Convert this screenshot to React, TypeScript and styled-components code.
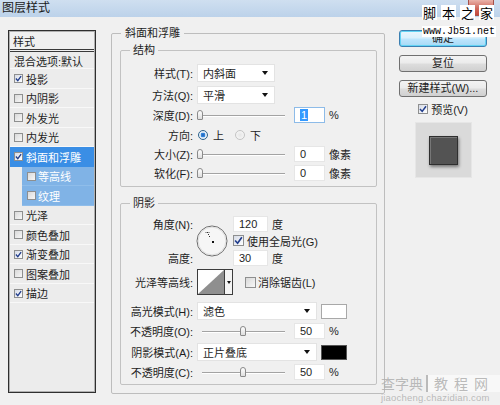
import React from 'react';
import styled, { createGlobalStyle, css } from 'styled-components';

const GlobalStyle = createGlobalStyle`
  html, body {
    margin: 0;
    padding: 0;
    background: #f0f0f0;
  }
  body {
    font-family: "Liberation Sans", "Noto Sans CJK SC", sans-serif;
    font-size: 11px;
    color: #1e1e1e;
  }
`;

const Window = styled.div`
  position: relative;
  width: 500px;
  height: 405px;
  overflow: hidden;
  background: #f0f0f0;
  display: flex;
  flex-direction: column;
`;

const TitleBar = styled.div`
  height: 17px;
  flex: none;
  display: flex;
  align-items: center;
  justify-content: space-between;
  padding-left: 2px;
  background: linear-gradient(#cfdff0, #bcd2ea);
  font-size: 12px;
  line-height: 17px;
  color: #1b1b1b;
`;

const CloseButton = styled.div`
  align-self: flex-start;
  width: 26px;
  height: 16px;
  margin-right: 6px;
  box-sizing: border-box;
  border: 1px solid #a5524a;
  border-top: none;
  border-radius: 0 0 4px 4px;
  background: linear-gradient(#eab3aa, #d0695d 55%, #c2473b);
`;

const Body = styled.div`
  display: flex;
  align-items: flex-start;
  padding: 13px 0 0 8px;
`;

/* ---- left list ---- */

const Sidebar = styled.div`
  flex: none;
  width: 88px;
  height: 363px;
  box-sizing: border-box;
  border: 1px solid #2f2f2f;
  padding: 1px;
  background: #ececec;
  box-shadow: inset 0 0 0 1px #b0b0b0;
`;

const SideHeader = styled.div`
  height: 17px;
  padding-left: 3px;
  display: flex;
  align-items: center;
  border-bottom: 3px double #3a3a3a;
  background: #f0f0f0;
`;

const SideRow = styled.div<{ $selected?: boolean; $sub?: boolean; $h?: number }>`
  height: ${(p) => p.$h ?? 19.5}px;
  display: flex;
  align-items: center;
  gap: 3px;
  padding-left: 4px;
  box-shadow: inset 0 -1px 0 #f8f8f8;
  white-space: nowrap;
  ${(p) =>
    p.$selected &&
    css`
      background: #3a8ee5;
      color: #fff;
      box-shadow: none;
    `}
  ${(p) =>
    p.$sub &&
    css`
      margin-left: 12px;
      padding-left: 5px;
      gap: 2px;
      background: #80b3e6;
      color: #fff;
      box-shadow: inset 0 -1px 0 #8fbdea;
    `}
`;

const CheckBox = styled.span<{ $size: number; $on?: boolean }>`
  flex: none;
  width: ${(p) => p.$size}px;
  height: ${(p) => p.$size}px;
  box-sizing: border-box;
  border: 1px solid #8e8f8f;
  background: ${(p) => (p.$on ? 'linear-gradient(135deg, #d6dbe6, #ffffff)' : 'linear-gradient(135deg, #d9d9d9, #f7f7f7)')};
  display: inline-flex;
  align-items: center;
  justify-content: center;
`;

const Check: React.FC<{ on?: boolean; size?: number }> = ({ on, size = 9 }) => (
  <CheckBox $size={size} $on={on}>
    {on && (
      <svg width={size - 2} height={size - 2} viewBox="0 0 8 8">
        <path d="M1 4 L3.2 6.4 L7 1.2" fill="none" stroke="#213d8c" strokeWidth="1.5" />
      </svg>
    )}
  </CheckBox>
);

/* ---- groups ---- */

const Outer = styled.fieldset`
  flex: none;
  width: 274px;
  box-sizing: border-box;
  margin: -4px 0 0 15px;
  padding: 3px 7px 8px 8px;
  border: 1px solid #bdbdbd;
  border-radius: 2px;
  min-width: 0;
`;

const Group = styled.fieldset<{ $mt?: number; $pt: number; $pb: number }>`
  margin: ${(p) => p.$mt ?? 0}px 0 0;
  padding: ${(p) => p.$pt}px 0 ${(p) => p.$pb}px;
  border: 1px solid #c2c2c2;
  border-radius: 2px;
  min-width: 0;
`;

const Legend = styled.legend<{ $x: number; $pad: number }>`
  margin-left: ${(p) => p.$x}px;
  padding: 0 ${(p) => p.$pad}px;
  line-height: 14px;
  font-size: 11px;
`;

const Row = styled.div<{ $h: number; $mt?: number }>`
  height: ${(p) => p.$h}px;
  margin-top: ${(p) => p.$mt ?? 0}px;
  display: flex;
  align-items: center;
  white-space: nowrap;
`;

const Label = styled.span`
  flex: none;
  width: 72px;
  margin-right: 4px;
  text-align: right;
`;

const Select = styled.div<{ $w: number }>`
  flex: none;
  width: ${(p) => p.$w}px;
  height: 18px;
  box-sizing: border-box;
  padding: 0 6px 0 5px;
  display: flex;
  align-items: center;
  justify-content: space-between;
  background: #fff;
  border: 1px solid #e3e3e3;
`;

const Caret = styled.span`
  width: 0;
  height: 0;
  border-left: 3.5px solid transparent;
  border-right: 3.5px solid transparent;
  border-top: 4px solid #111;
`;

const SliderWrap = styled.div<{ $w: number; $ml?: number }>`
  position: relative;
  flex: none;
  width: ${(p) => p.$w}px;
  height: 10px;
  margin-left: ${(p) => p.$ml ?? 0}px;
`;

const Track = styled.div`
  position: absolute;
  left: 2px;
  right: 0;
  top: 5px;
  height: 1px;
  background: #a3a3a3;
  box-shadow: 0 1px 0 #ffffff;
`;

const Thumb = styled.div`
  position: absolute;
  top: 0;
  width: 6px;
  height: 10px;
  box-sizing: border-box;
  border: 1px solid #8a8a8a;
  border-radius: 3px 3px 1px 1px;
  background: linear-gradient(#ffffff, #dedede);
`;

const Slider: React.FC<{ w: number; ml?: number; pos: number }> = ({ w, ml, pos }) => (
  <SliderWrap $w={w} $ml={ml}>
    <Track />
    <Thumb style={{ left: Math.round(pos * (w - 6)) }} />
  </SliderWrap>
);

const NumBox = styled.div<{ $w?: number; $ml?: number; $focus?: boolean }>`
  flex: none;
  width: ${(p) => p.$w ?? 31}px;
  height: 16px;
  margin-left: ${(p) => p.$ml ?? 9}px;
  box-sizing: border-box;
  padding-left: 5px;
  display: flex;
  align-items: center;
  background: #fff;
  border: 1px solid ${(p) => (p.$focus ? '#8dbbe8' : '#e6e6e6')};
`;

const Highlight = styled.span`
  background: #3399ff;
  color: #fff;
  padding: 0 1px;
  line-height: 12px;
`;

const Unit = styled.span`
  margin-left: 4px;
`;

const Radio = styled.span<{ $on?: boolean }>`
  flex: none;
  width: 10px;
  height: 10px;
  box-sizing: border-box;
  border-radius: 50%;
  margin-left: ${(p) => (p.$on ? 1 : 11)}px;
  margin-right: 5px;
  ${(p) =>
    p.$on
      ? css`
          border: 1px solid #2c628b;
          background: radial-gradient(circle, #1b5fb8 0, #3c8ee0 2.2px, #dbe9f6 2.6px, #f4f8fc 100%);
        `
      : css`
          border: 1px solid #c4c4c4;
          background: radial-gradient(circle, #e6e6e6, #fafafa);
        `}
`;

const DialGrid = styled.div`
  display: grid;
  grid-template-columns: 72px 36px 1fr;
  grid-template-rows: repeat(3, 17px);
  white-space: nowrap;
`;

const GridLabel = styled.span<{ $row: number }>`
  grid-column: 1;
  grid-row: ${(p) => p.$row};
  align-self: center;
  text-align: right;
`;

const DialCell = styled.div`
  grid-column: 2;
  grid-row: 1 / 4;
  align-self: center;
  margin-left: 3px;
  display: flex;
`;

const GridCell = styled.div<{ $row: number }>`
  grid-column: 3;
  grid-row: ${(p) => p.$row};
  display: flex;
  align-items: center;
  margin-left: 4px;
`;

const CheckText = styled.span<{ $gap: number }>`
  margin-left: ${(p) => p.$gap}px;
`;

const AngleDial = () => (
  <svg width="32" height="32" viewBox="0 0 32 32">
    <circle cx="16" cy="16" r="15" fill="#f6f6f6" stroke="#6c6c6c" />
    <circle cx="16" cy="16" r="13.8" fill="none" stroke="#e0e0e0" />
    <rect x="16" y="16" width="2" height="2" fill="#111" />
    <rect x="13" y="11" width="1" height="1" fill="#333" />
    <rect x="12" y="9" width="1" height="1" fill="#333" />
    <rect x="11" y="7" width="1" height="1" fill="#333" />
    <rect x="9.5" y="7" width="1" height="1" fill="#555" />
    <rect x="12.5" y="7" width="1" height="1" fill="#555" />
  </svg>
);

const ContourPicker = styled.div`
  flex: none;
  width: 36px;
  height: 26px;
  box-sizing: border-box;
  border: 1px solid #3c3c3c;
  display: flex;
  background: #fff;
`;

const ContourArrow = styled.div`
  flex: 1;
  border-left: 1px solid #3c3c3c;
  display: flex;
  align-items: center;
  justify-content: center;
  background: #f4f4f4;
`;

const SmallCaret = styled.span`
  width: 0;
  height: 0;
  border-left: 2.5px solid transparent;
  border-right: 2.5px solid transparent;
  border-top: 3px solid #111;
`;

const Swatch = styled.div<{ $color: string }>`
  flex: none;
  width: 26px;
  height: 15px;
  margin-left: 4px;
  box-sizing: border-box;
  background: ${(p) => p.$color};
  border: 1px solid ${(p) => (p.$color === '#000000' ? '#555' : '#a8a8a8')};
`;

/* ---- right column ---- */

const RightCol = styled.div`
  flex: none;
  width: 88px;
  margin-left: 14px;
  display: flex;
  flex-direction: column;
  align-items: center;
`;

const ButtonStack = styled.div`
  display: flex;
  flex-direction: column;
  gap: 8px;
`;

const Button = styled.div<{ $primary?: boolean }>`
  width: 88px;
  height: 17px;
  box-sizing: border-box;
  border: 1px solid #707070;
  border-radius: 3px;
  background: linear-gradient(#f3f3f3, #ebebeb 48%, #dddddd 52%, #d0d0d0);
  display: flex;
  align-items: center;
  justify-content: center;
  line-height: 15px;
  ${(p) =>
    p.$primary &&
    css`
      border-color: #3c7fb1;
      box-shadow: inset 0 0 0 1px #62d4f4;
      background: linear-gradient(#eaf6fd, #d9f0fc 48%, #bee6fd 52%, #a7d9f5);
    `}
`;

const PreviewCheck = styled.div`
  height: 14px;
  margin-top: 5px;
  display: flex;
  align-items: center;
  gap: 3px;
`;

const PreviewBox = styled.div`
  width: 57px;
  height: 56px;
  margin-top: 6px;
  box-sizing: border-box;
  border: 1px solid #e6e6e6;
  background: #dadada;
  display: flex;
  align-items: center;
  justify-content: center;
`;

const PreviewSquare = styled.div`
  width: 29px;
  height: 29px;
  box-sizing: border-box;
  background: #535353;
  border: 1px solid #2f2f2f;
  box-shadow: inset 1px 1px 0 #777, 1px 2px 3px rgba(0, 0, 0, 0.45);
`;

/* ---- watermarks over the shot ---- */

const SiteMark = styled.div`
  position: absolute;
  top: 5px;
  left: 422px;
  display: flex;
  gap: 4px;
  font-family: "Noto Sans CJK SC", sans-serif;
  font-size: 13px;
  line-height: 15px;
  color: #000;
`;

const SiteChar = styled.span`
  background: #fff;
  padding: 0 1px;
`;

const UrlMark = styled.div`
  position: absolute;
  top: 26px;
  left: 422px;
  padding: 0 1px;
  background: #fff;
  font-family: "Liberation Mono", monospace;
  font-size: 10px;
  line-height: 11px;
  color: #000;
`;

const BottomMark = styled.div`
  position: absolute;
  left: 381px;
  top: 375px;
  display: flex;
  flex-direction: column;
  color: rgba(175, 175, 175, 0.85);
  font-family: "Noto Sans CJK SC", sans-serif;
`;

const MarkLine = styled.div`
  display: flex;
  align-items: center;
  gap: 3px;
  font-size: 14px;
  line-height: 17px;
`;

const MarkBox = styled.span`
  padding: 0 6px;
  letter-spacing: 6px;
  border-left: 2px solid rgba(175, 175, 175, 0.85);
  background: rgba(255, 255, 255, 0.55);
`;

const MarkUrl = styled.div`
  font-family: "Liberation Sans", sans-serif;
  font-size: 9.5px;
  line-height: 11px;
  letter-spacing: 0.2px;
`;

const styles = [
  { name: '投影', on: true },
  { name: '内阴影' },
  { name: '外发光' },
  { name: '内发光' },
  { name: '斜面和浮雕', on: true, selected: true },
  { name: '等高线', sub: true },
  { name: '纹理', sub: true },
  { name: '光泽' },
  { name: '颜色叠加' },
  { name: '渐变叠加', on: true },
  { name: '图案叠加' },
  { name: '描边', on: true },
];

export default function App() {
  return (
    <Window>
      <GlobalStyle />
      <TitleBar>
        <span>图层样式</span>
        <CloseButton />
      </TitleBar>
      <Body>
        <Sidebar>
          <SideHeader>样式</SideHeader>
          <SideRow $h={17}>混合选项:默认</SideRow>
          {styles.map((s) => (
            <SideRow key={s.name} $selected={s.selected} $sub={s.sub}>
              <Check on={s.on} />
              {s.name}
            </SideRow>
          ))}
        </Sidebar>

        <Outer>
          <Legend $x={1} $pad={4}>斜面和浮雕</Legend>
          <Group $pt={6} $pb={3}>
            <Legend $x={9} $pad={3}>结构</Legend>
            <Row $h={20}>
              <Label>样式(T):</Label>
              <Select $w={78}>
                内斜面
                <Caret />
              </Select>
            </Row>
            <Row $h={20} $mt={2}>
              <Label>方法(Q):</Label>
              <Select $w={78}>
                平滑
                <Caret />
              </Select>
            </Row>
            <Row $h={20}>
              <Label>深度(D):</Label>
              <Slider w={88} pos={0} />
              <NumBox $focus>
                <Highlight>1</Highlight>
              </NumBox>
              <Unit>%</Unit>
            </Row>
            <Row $h={19}>
              <Label>方向:</Label>
              <Radio $on />
              上
              <Radio />
              下
            </Row>
            <Row $h={19}>
              <Label>大小(Z):</Label>
              <Slider w={88} pos={0} />
              <NumBox>0</NumBox>
              <Unit>像素</Unit>
            </Row>
            <Row $h={20}>
              <Label>软化(F):</Label>
              <Slider w={88} pos={0} />
              <NumBox>0</NumBox>
              <Unit>像素</Unit>
            </Row>
          </Group>

          <Group $mt={9} $pt={5} $pb={3}>
            <Legend $x={9} $pad={3}>阴影</Legend>
            <DialGrid>
              <GridLabel $row={1}>角度(N):</GridLabel>
              <GridLabel $row={3}>高度:</GridLabel>
              <DialCell>
                <AngleDial />
              </DialCell>
              <GridCell $row={1}>
                <NumBox $w={35} $ml={0}>120</NumBox>
                <Unit>度</Unit>
              </GridCell>
              <GridCell $row={2}>
                <Check on size={11} />
                <CheckText $gap={3}>使用全局光(G)</CheckText>
              </GridCell>
              <GridCell $row={3}>
                <NumBox $w={35} $ml={0}>30</NumBox>
                <Unit>度</Unit>
              </GridCell>
            </DialGrid>
            <Row $h={26} $mt={3}>
              <Label>光泽等高线:</Label>
              <ContourPicker>
                <svg width="26" height="24" viewBox="0 0 26 24">
                  <polygon points="0,24 26,0 26,24" fill="#8f8f8f" />
                </svg>
                <ContourArrow>
                  <SmallCaret />
                </ContourArrow>
              </ContourPicker>
              <span style={{ width: 12 }} />
              <Check size={11} />
              <CheckText $gap={2}>消除锯齿(L)</CheckText>
            </Row>
            <Row $h={20} $mt={6}>
              <Label>高光模式(H):</Label>
              <Select $w={120}>
                滤色
                <Caret />
              </Select>
              <Swatch $color="#ffffff" />
            </Row>
            <Row $h={19}>
              <Label>不透明度(O):</Label>
              <Slider w={85} ml={3} pos={0.5} />
              <NumBox>50</NumBox>
              <Unit>%</Unit>
            </Row>
            <Row $h={20} $mt={2}>
              <Label>阴影模式(A):</Label>
              <Select $w={120}>
                正片叠底
                <Caret />
              </Select>
              <Swatch $color="#000000" />
            </Row>
            <Row $h={19}>
              <Label>不透明度(C):</Label>
              <Slider w={85} ml={3} pos={0.5} />
              <NumBox>50</NumBox>
              <Unit>%</Unit>
            </Row>
          </Group>
        </Outer>

        <RightCol>
          <ButtonStack>
            <Button $primary>确定</Button>
            <Button>复位</Button>
            <Button>新建样式(W)...</Button>
          </ButtonStack>
          <PreviewCheck>
            <Check on size={10} />
            预览(V)
          </PreviewCheck>
          <PreviewBox>
            <PreviewSquare />
          </PreviewBox>
        </RightCol>
      </Body>

      <SiteMark>
        <SiteChar>脚</SiteChar>
        <SiteChar>本</SiteChar>
        <SiteChar>之</SiteChar>
        <SiteChar>家</SiteChar>
      </SiteMark>
      <UrlMark>www.Jb51.net</UrlMark>
      <BottomMark>
        <MarkLine>
          查字典
          <MarkBox>教程网</MarkBox>
        </MarkLine>
        <MarkUrl>jiaocheng.chazidian.com</MarkUrl>
      </BottomMark>
    </Window>
  );
}
